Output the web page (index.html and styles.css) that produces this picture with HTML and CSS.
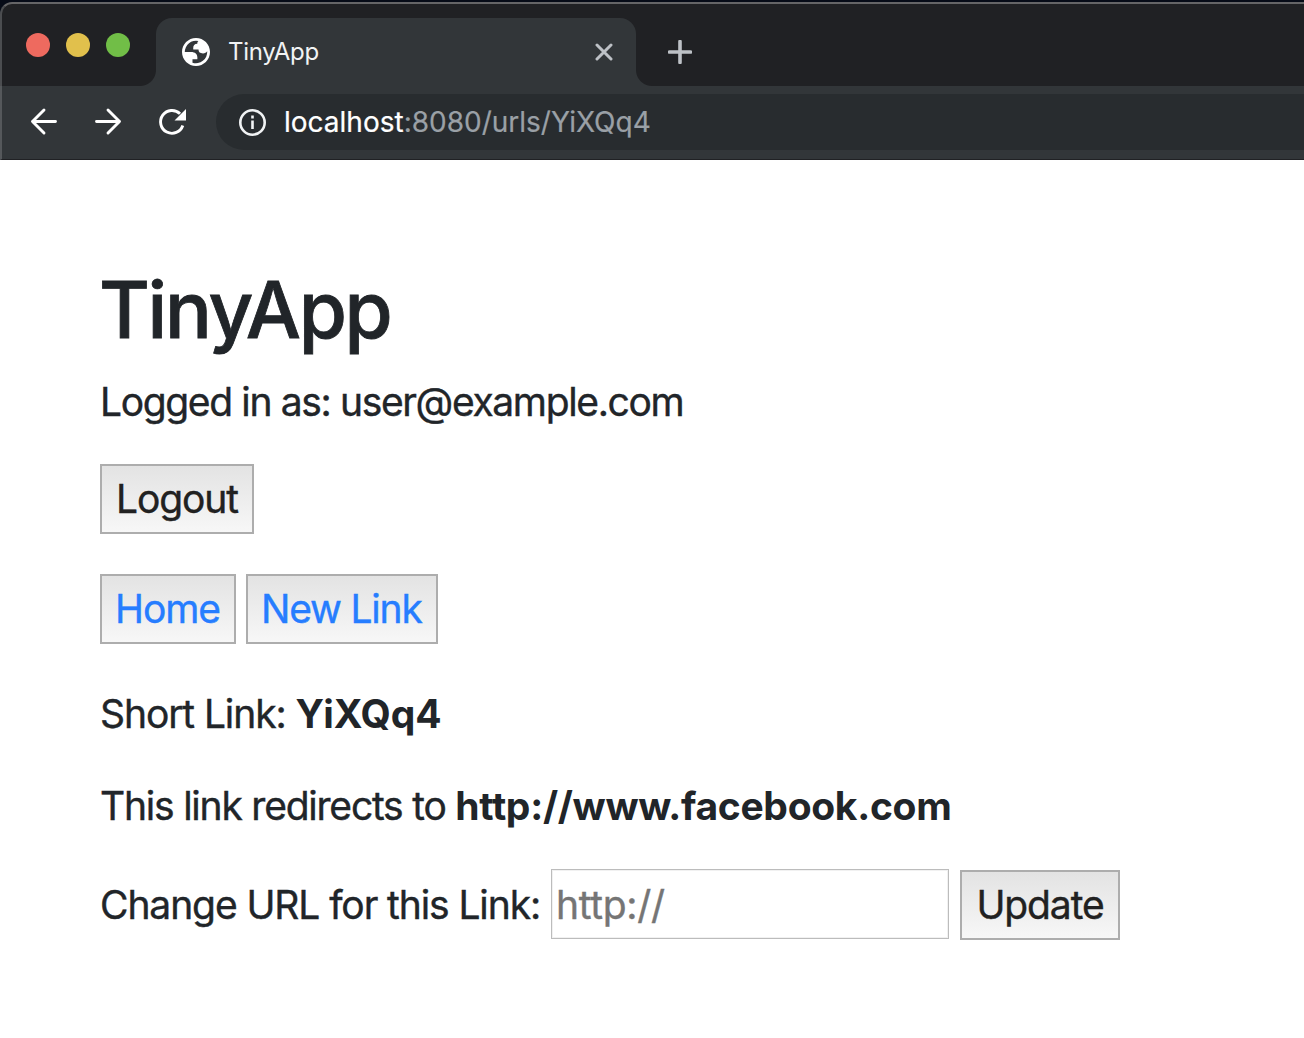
FILE: index.html
```html
<!DOCTYPE html>
<html lang="en">
<head>
<meta charset="utf-8">
<title>TinyApp</title>
<link rel="stylesheet" href="styles.css">
</head>
<body>
<div class="browser">
  <div class="tabstrip">
    <div class="lights"><span class="light red"></span><span class="light yellow"></span><span class="light green"></span></div>
    <div class="tab">
      <svg class="globe" viewBox="2 2 20 20"><path fill="#fff" fill-rule="evenodd" d="M12 2C6.48 2 2 6.48 2 12s4.48 10 10 10 10-4.48 10-10S17.52 2 12 2zM4 12h4.4c3.407.022 4.922 1.73 4.543 5.127H9.488v2.47a8.004 8.004 0 0 0 10.498-8.08C19.327 12.504 18.332 13 17 13c-2.137 0-3.206-.916-3.206-2.75h-3.748c-.274-2.728.683-4.092 2.870-4.092 0-.975.327-1.597.811-1.970A8.004 8.004 0 0 0 4 12z"/></svg>
      <span class="tab-title">TinyApp</span>
      <svg class="close" viewBox="0 0 18 18"><path d="M2 2l14 14M16 2L2 16"/></svg>
    </div>
    <svg class="plus" viewBox="0 0 24 24"><path d="M12 1.500v21M1.500 12h21"/></svg>
  </div>
  <div class="toolbar">
    <svg class="nav" viewBox="0 0 32 32"><path d="M27.500 15.500H4.500M16 4L4.500 15.500 16 27"/></svg>
    <svg class="nav" viewBox="0 0 32 32"><path d="M4.500 15.500h23M16 4l11.500 11.500L16 27"/></svg>
    <svg class="nav reload" viewBox="0 0 32 32"><path d="M26.800 19.500A11.400 11.400 0 1 1 24 7.800"/><path class="solid" d="M30 3v11.500H18.500z"/></svg>
    <div class="omnibox">
      <svg class="info" viewBox="0 0 28 28"><circle cx="14.500" cy="14.500" r="12.200"/><path d="M14.500 7.600v3M14.500 12.600v8.400"/></svg>
      <span class="url"><span class="host">localhost</span>:8080/urls/YiXQq4</span>
    </div>
  </div>
</div>
<main class="page">
  <h1 class="title">TinyApp</h1>
  <p class="text logged">Logged in as: user@example.com</p>
  <div class="row logout-row"><button class="btn logout">Logout</button></div>
  <div class="row nav-row"><a class="btn link home">Home</a><a class="btn link new-link">New Link</a></div>
  <p class="text"><span class="short">Short Link: </span><b class="code">YiXQq4</b></p>
  <p class="text"><span class="redirects">This link redirects to </span><b class="target">http://www.facebook.com</b></p>
  <form class="row form">
    <label class="label">Change URL for this Link:</label>
    <input class="field" type="text" placeholder="http://">
    <button class="btn update" type="button">Update</button>
  </form>
</main>
</body>
</html>
```
FILE: styles.css
```css
* { box-sizing: border-box; }
body {
  margin: 0;
  height: 1038px;
  overflow: hidden;
  background: #fff;
  color: #212529;
  font: 39px/60px Inter, "Liberation Sans", sans-serif;
}
svg { display: block; flex: none; }
.browser { height: 160px; background: #060b17; padding-top: 2px; }
.tabstrip {
  height: 84px;
  background: #202124;
  border-top: 2px solid #656567;
  border-left: 2px solid #4b4d50;
  border-top-left-radius: 12px;
  display: flex;
  padding-left: 24px;
}
.lights { display: flex; gap: 16px; width: 130px; padding-top: 29px; }
.light { width: 24px; height: 24px; border-radius: 50%; }
.red { background: #ee6a5f; }
.yellow { background: #e1c04c; }
.green { background: #71be47; }
.tab {
  position: relative;
  width: 480px;
  height: 68px;
  margin-top: 14px;
  padding: 0 23px 0 26px;
  display: flex;
  align-items: center;
  background: #323639;
  border-radius: 16px 16px 0 0;
}
.tab::before, .tab::after {
  content: "";
  position: absolute;
  bottom: 0;
  width: 16px;
  height: 16px;
}
.tab::before { left: -16px; background: radial-gradient(circle at 0 0, transparent 15.5px, #323639 16.5px); }
.tab::after { right: -16px; background: radial-gradient(circle at 100% 0, transparent 15.5px, #323639 16.5px); }
.globe { width: 28px; height: 28px; }
.tab-title { flex: 1; margin-left: 18px; color: #f1f3f4; font-size: 24px; line-height: 32px; letter-spacing: -0.3px; }
.close { width: 18px; height: 18px; stroke: #bdc1c6; stroke-width: 3; stroke-linecap: round; }
.plus { width: 24px; height: 24px; margin: 36px 0 0 32px; stroke: #bdc1c6; stroke-width: 3.6; stroke-linecap: round; }
.toolbar {
  height: 74px;
  padding: 8px 0 0 26px;
  display: flex;
  gap: 32px;
  background: #323639;
  border-left: 2px solid #55585b;
  border-bottom: 1px solid #202124;
}
.nav { width: 32px; height: 32px; margin-top: 12px; fill: none; stroke: #fff; stroke-width: 2.9; stroke-linecap: round; stroke-linejoin: round; }
.reload { stroke-linecap: butt; }
.nav .solid { fill: #fff; stroke: none; }
.omnibox {
  flex: 1;
  margin-left: -4px;
  height: 56px;
  padding-left: 22px;
  display: flex;
  align-items: center;
  background: #282c2f;
  border-radius: 28px 0 0 28px;
}
.info { width: 28px; height: 28px; fill: none; stroke: #f1f3f4; stroke-width: 2.6; }
.url { margin-left: 18px; color: #9aa0a6; font-size: 28px; line-height: 40px; -webkit-text-stroke: 0.2px; }
.host { color: #fff; }
.page { padding: 100px 100px 0; -webkit-text-stroke: 0.4px; }
.title { margin: 0 0 16px -1px; padding-top: 2px; height: 96px; font-size: 78px; line-height: 96px; font-weight: 500; letter-spacing: -2.3px; -webkit-text-stroke: 0.8px; }
.text { margin: 0 0 32px; height: 60px; white-space: pre; }
.logged { letter-spacing: -1.36px; }
.short { letter-spacing: -1.1px; }
.redirects { letter-spacing: -1.22px; }
.label { letter-spacing: -1.1px; }
.code { letter-spacing: 0; -webkit-text-stroke: 0; }
.target { letter-spacing: -0.3px; -webkit-text-stroke: 0; }
.row { display: flex; }
.logout-row { margin-bottom: 40px; }
.nav-row { gap: 10px; margin-bottom: 40px; }
.btn {
  height: 70px;
  padding: 0 13px;
  border: 2px solid #adadad;
  background: linear-gradient(#e3e3e3, #f7f7f7);
  color: #212121;
  font: inherit;
  line-height: 66px;
  letter-spacing: -1.1px;
  white-space: nowrap;
}
.link { color: #267dff; }
.logout { width: 154px; }
.home { width: 136px; }
.new-link { width: 192px; letter-spacing: -1.2px; }
.form { margin-top: 33px; align-items: flex-start; }
.label { width: 451px; line-height: 71px; white-space: nowrap; }
.field {
  width: 398px;
  height: 70px;
  padding: 0 4px;
  border: 1px solid #bcbcbc;
  box-shadow: inset 0 0 0 1px #f1f1f1;
  font: inherit;
  letter-spacing: -0.3px;
  outline: none;
}
.field::placeholder { color: #757575; }
.update { width: 160px; margin: 1px 0 0 11px; }
```
